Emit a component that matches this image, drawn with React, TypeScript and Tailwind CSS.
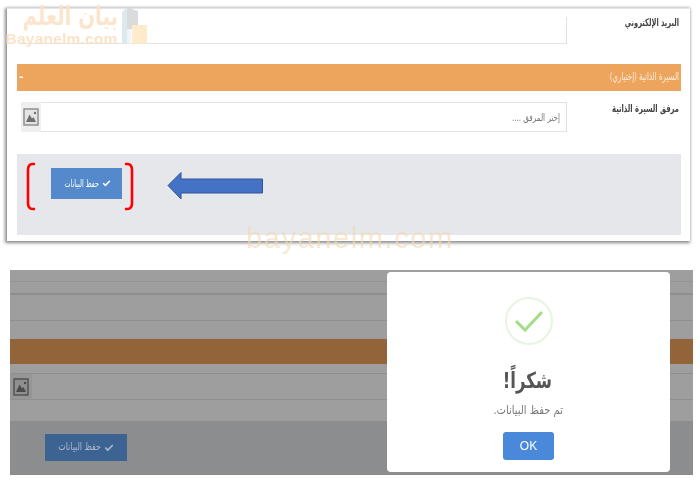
import { Check } from "lucide-react";

const arabic = "font-['DejaVu_Sans',sans-serif]";
const squeezed = "block whitespace-nowrap origin-right";

function ImageGlyph({ dark = false }: { dark?: boolean }) {
  const line = dark ? "#4f4f4f" : "#8a8a8a";
  const fill = dark ? "#4a4a4a" : "#6f6f6f";
  return (
    <svg width="16" height="18" viewBox="0 0 16 18">
      <rect x="1" y="1" width="14" height="16" fill={dark ? "#8f8f8f" : "#e4e4e4"} stroke={line} strokeWidth="1.4" />
      <path d="M3 14 L6.5 6.5 L9 10.5 L10.5 9 L13 14 Z" fill={fill} />
      <circle cx="12" cy="5" r="1.2" fill={fill} />
    </svg>
  );
}

function Bracket({ flip = false }: { flip?: boolean }) {
  return (
    <svg width="10" height="49" viewBox="0 0 10 49" className={flip ? "-scale-x-100" : ""}>
      <path d="M9 2 H6.5 Q2 2 2 8 V41 Q2 47 6.5 47 H9" fill="none" stroke="#fe0000" strokeWidth="2.6" />
    </svg>
  );
}

function BlueArrow() {
  return (
    <svg width="97" height="29" viewBox="0 0 97 29">
      <path d="M1 14.5 L14 1.5 V8 H95.5 V22 H14 V28 Z" fill="#4472c4" stroke="#2f5597" strokeWidth="1" />
    </svg>
  );
}

function Watermark() {
  return (
    <div dir="ltr" className="absolute top-0 left-[3px] flex h-[47px] w-[146px] opacity-90">
      <div className="flex w-[117px] flex-col items-center">
        <span dir="rtl" className={`${arabic} ${squeezed} mt-[2px] h-[29px] w-[112px] scale-x-[0.76] text-[26px] leading-[29px] font-bold text-[#fbe3c8]`}>
          بيان العلم
        </span>
        <span className="font-['Liberation_Sans',sans-serif] text-[15.5px] leading-[16px] font-bold tracking-[0.2px] whitespace-nowrap text-[#fbe0c2]">
          Bayanelm.com
        </span>
      </div>
      <svg width="28" height="40" viewBox="0 0 28 40" className="mt-[7px]">
        <path d="M7 0 L18 4 V22 H7 Z" fill="#d5d8da" />
        <path d="M2 5 L7 0 V37 H2 Z" fill="#d9e8ef" />
        <rect x="12" y="18" width="15" height="19" fill="#fde9c7" />
        <rect x="7" y="22" width="4" height="15" fill="#eef3f5" />
      </svg>
    </div>
  );
}

function SaveButton({ dim = false }: { dim?: boolean }) {
  return (
    <div
      className={`flex items-center justify-center gap-[3px] ${arabic} ${
        dim ? "h-[27px] w-[82px] bg-[#3c6392] text-[11px] text-[#a9b8c9]" : "h-[31px] w-[71px] bg-[#548acb] text-[10px] text-white"
      }`}
    >
      <Check size={dim ? 10 : 9} strokeWidth={4} />
      <span className={`${squeezed} ${dim ? "w-[42px] scale-x-[0.72]" : "w-[36px] scale-x-[0.64]"}`}>حفظ البيانات</span>
    </div>
  );
}

function FormCard() {
  return (
    <div className="mr-[10px] h-[233px] w-[683px] border-t border-[#e6e6e6] bg-white pt-[8px] pr-[9px] pl-[10px] shadow-[-1px_1px_3px_1px_#8a8a8a]">
      <div className="flex h-[27px]">
        <div className={`w-[114px] pr-[2px] ${arabic} text-[10.5px] leading-[10px] font-bold text-[#444]`}>
          <span className={`${squeezed} w-[54px] scale-x-[0.635]`}>البريد الإلكتروني</span>
        </div>
        <div className="h-[27px] w-[547px] border-r border-b border-[#e2e2e2]" />
      </div>

      <div className={`mt-[20px] flex h-[27px] items-center justify-between bg-[#eda45c] px-[2px] ${arabic} text-[11px] text-[#fdeee0]`}>
        <span className={`${squeezed} w-[69px] scale-x-[0.64]`}>السيرة الذاتية (إختياري)</span>
        <span className="font-bold text-white">-</span>
      </div>

      <div className="mt-[11px] flex h-[30px]">
        <div className={`w-[114px] pr-[2px] ${arabic} text-[10.5px] leading-[12px] font-bold text-[#444]`}>
          <span className={`${squeezed} w-[67px] scale-x-[0.645]`}>مرفق السيرة الذاتية</span>
        </div>
        <div className={`ml-[4px] flex h-[30px] flex-1 items-center justify-between border border-[#e2e2e2] pr-[6px] ${arabic} text-[10px] text-[#777]`}>
          <span className={`${squeezed} w-[48px] scale-x-[0.72]`}>إختر المرفق ....</span>
          <div className="-ml-px flex h-[30px] w-[20px] items-center justify-center bg-[#efefef]">
            <ImageGlyph />
          </div>
        </div>
      </div>

      <div className="relative mt-[22px] flex h-[81px] items-start justify-end bg-[#e6e7eb] pt-[14px] pl-[34px]">
        <SaveButton />
        <div className="absolute top-[8px] left-[9px]">
          <Bracket />
        </div>
        <div className="absolute top-[8px] left-[107px]">
          <Bracket flip />
        </div>
        <div className="absolute top-[17px] left-[150px]">
          <BlueArrow />
        </div>
      </div>
    </div>
  );
}

function SuccessModal() {
  return (
    <div className={`absolute top-[2px] left-[377px] flex h-[200px] w-[283px] flex-col items-center rounded-[4px] bg-white pt-[25px] ${arabic}`}>
      <div className="flex h-[48px] w-[48px] items-center justify-center rounded-full border-2 border-[#e6f5dd]">
        <svg width="30" height="24" viewBox="0 0 30 24">
          <path d="M2 12 L11 21 L28 3" fill="none" stroke="#a5dc86" strokeWidth="3" />
        </svg>
      </div>
      <div className="mt-[15px] flex h-[40px] items-center text-[22px] font-bold text-[#555]">
        <span className={`${squeezed} w-[47px] scale-x-[0.75]`}>شكراً!</span>
      </div>
      <div className="flex h-[20px] items-center text-[12px] text-[#797979]">
        <span className={`${squeezed} w-[69px] scale-x-[0.83]`}>تم حفظ البيانات.</span>
      </div>
      <div className="mt-[12px] flex h-[28px] w-[51px] items-center justify-center rounded-[3px] bg-[#4a88d9] font-['Liberation_Sans',sans-serif] text-[12px] text-white">
        OK
      </div>
    </div>
  );
}

function DimmedForm() {
  return (
    <div className="relative mt-[29px] mr-[7px] h-[205px] w-[683px] bg-[#9e9e9e]">
      <div className="h-[12px] border-b border-[#929292]" />
      <div className="h-[13px] border-b-2 border-[#8f8f8f]" />
      <div className="h-[26px] border-b border-[#8f8f8f]" />
      <div className="mt-[18px] h-[25px] bg-[#93633a]" />
      <div className="mt-[9px] flex h-[27px] justify-end border-y border-[#8f8f8f]">
        <div className="flex w-[22px] items-center justify-center bg-[#969696]">
          <ImageGlyph dark />
        </div>
      </div>
      <div className="mt-[21px] flex h-[54px] items-start justify-end bg-[#8c8d8f] pt-[13px] pl-[35px]">
        <SaveButton dim />
      </div>
      <SuccessModal />
    </div>
  );
}

export default function App() {
  return (
    <div dir="rtl" className="relative flex h-[481px] w-[700px] flex-col overflow-hidden bg-white pt-[8px] blur-[0.3px]">
      <FormCard />
      <DimmedForm />
      <Watermark />
      <div className="absolute top-[221px] left-[246px] font-['Liberation_Sans',sans-serif] text-[29px] leading-[34px] tracking-[1.6px] text-[#f3d9b3] opacity-60">
        bayanelm.com
      </div>
    </div>
  );
}
